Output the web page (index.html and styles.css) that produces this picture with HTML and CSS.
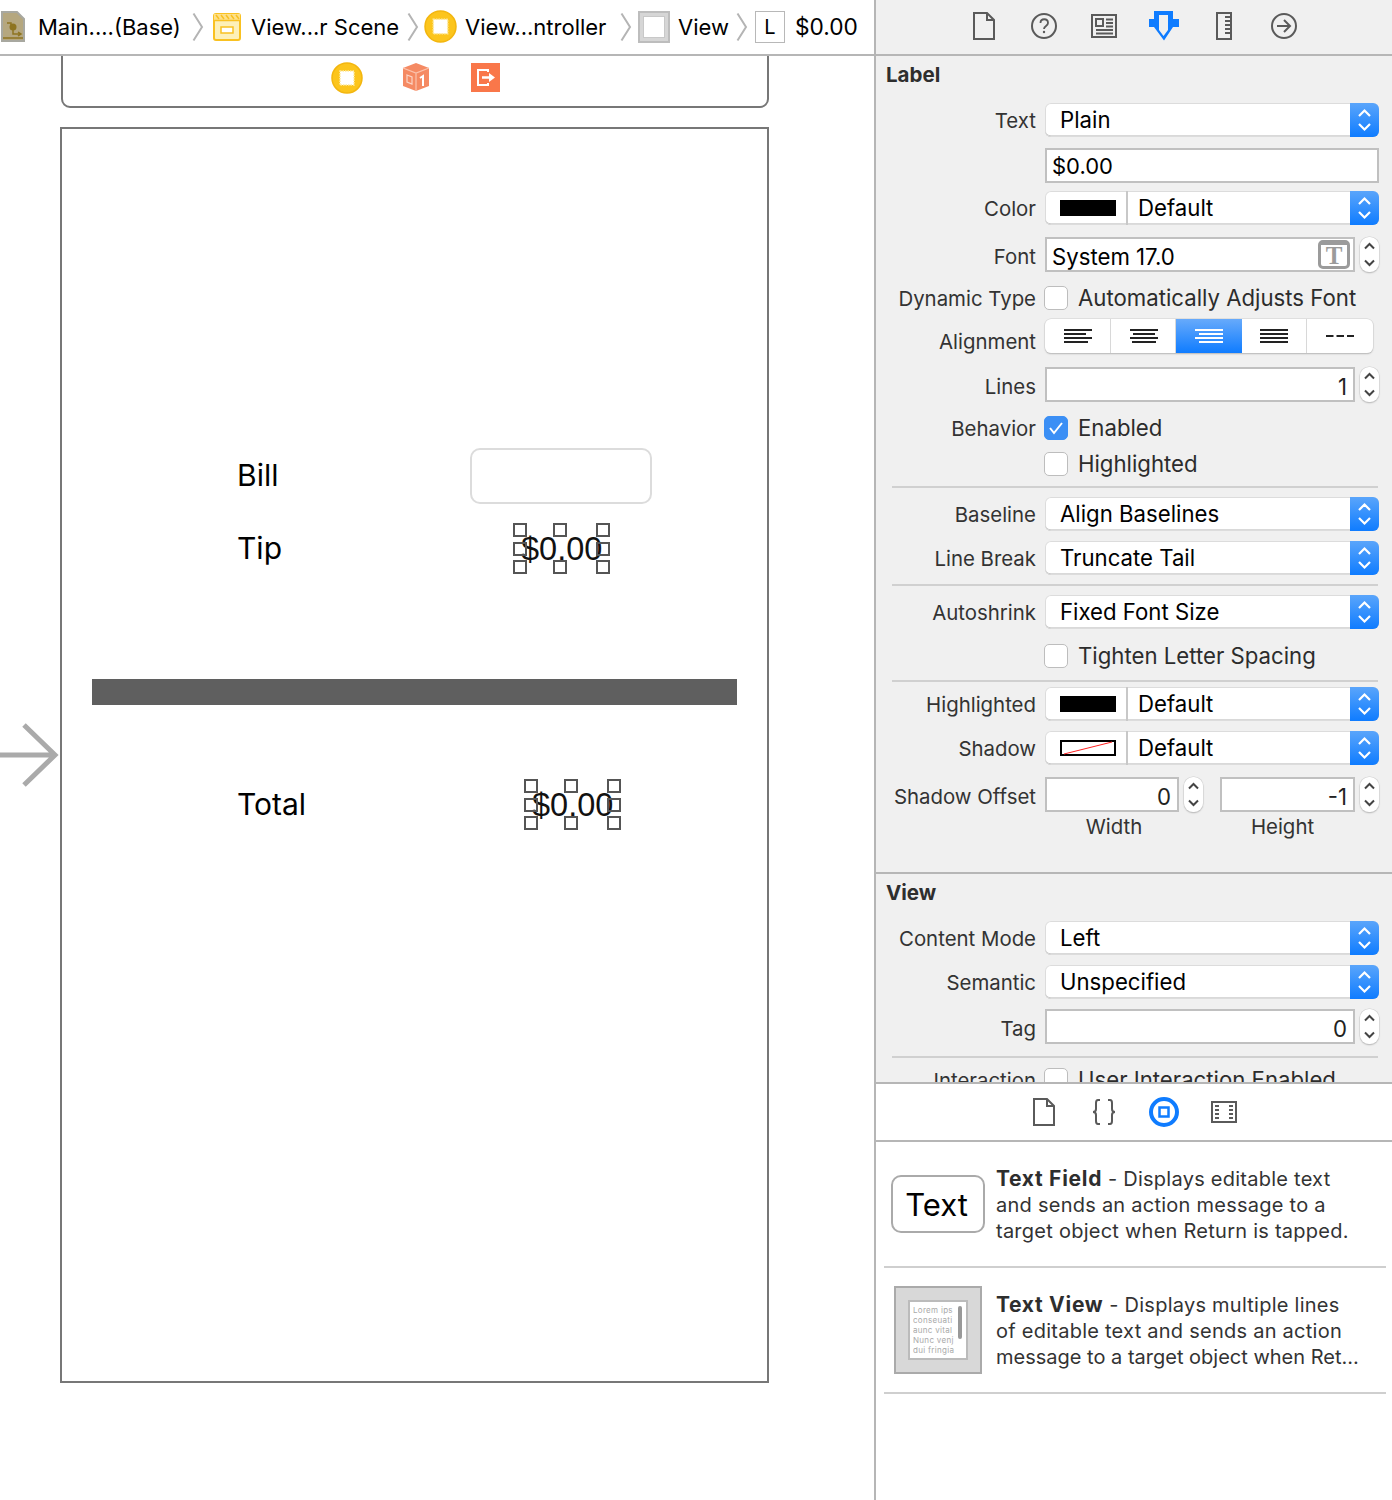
FILE: index.html
```html
<!DOCTYPE html>
<html lang="en">
<head>
<meta charset="utf-8">
<title>Storyboard</title>
<link rel="stylesheet" href="styles.css">
</head>
<body>
<svg class="defs" width="0" height="0">
  <symbol id="updown" viewBox="0 0 29 34"><path d="M9 13l5.500-5.500L20 13M9 21l5.500 5.500L20 21" fill="none" stroke="#fff" stroke-width="2.200"/></symbol>
  <symbol id="stepicon" viewBox="0 0 19 35"><path d="M5 11.500l4.500-4.500 4.500 4.500M5 23.500l4.500 4.500 4.500-4.500" fill="none" stroke="#444" stroke-width="2"/></symbol>
  <symbol id="crumbchev" viewBox="0 0 12 30"><path d="M1.500 1.500L10 15 1.500 28.500" fill="none" stroke="#b4b4b4" stroke-width="2"/></symbol>
  <symbol id="chip" viewBox="0 0 32 32"><circle cx="16" cy="16" r="15" fill="#fcc51c" stroke="#f3b60f" stroke-width="1.500"/><rect x="9" y="9" width="14" height="14" fill="#fff" stroke="#fde9a0" stroke-width="1.500" stroke-dasharray="1.500 1"/></symbol>
</svg>
<div class="app">
  <main class="editor">
    <nav class="crumbs">
      <svg class="c-doc" width="26" height="32" viewBox="0 0 26 32"><path d="M2 1h15l7 7v22H2z" fill="#b5a77f" stroke="#a8a8a0" stroke-width="2"/><circle cx="13" cy="16" r="3.500" fill="#8e7420"/><path d="M7 12h4v4M13 16v7h8M18 21l3 2-3 2M3 27h20" fill="none" stroke="#8e7420" stroke-width="1.500"/></svg>
      <span class="c-text c-main">Main....(Base)</span>
      <svg class="c-chev" width="12" height="30"><use href="#crumbchev"/></svg>
      <svg class="c-scene" width="28" height="28" viewBox="0 0 28 28"><rect x="1" y="1" width="26" height="26" rx="2" fill="#fdf0b8" stroke="#f9c121" stroke-width="2"/><path d="M1 1h26v6H1z" fill="#fde08a"/><path d="M3 2l3 4M8 2l3 4M13 2l3 4M18 2l3 4M23 2l3 4" stroke="#f9c121" stroke-width="1.500"/><path d="M1 7.500h26" stroke="#f9c121" stroke-width="1.500"/><rect x="8" y="14" width="12" height="6" fill="#fff" stroke="#f9c121" stroke-width="1.500"/></svg>
      <span class="c-text c-scenetext">View...r Scene</span>
      <svg class="c-chev c-tight" width="12" height="30"><use href="#crumbchev"/></svg>
      <svg class="c-chip" width="33" height="33"><use href="#chip"/></svg>
      <span class="c-text c-vc">View...ntroller</span>
      <svg class="c-chev c-wide" width="12" height="30"><use href="#crumbchev"/></svg>
      <span class="c-view"><span class="c-view-in"></span></span>
      <span class="c-text c-viewtext">View</span>
      <svg class="c-chev" width="12" height="30"><use href="#crumbchev"/></svg>
      <span class="c-l">L</span>
      <span class="c-text c-amount">$0.00</span>
    </nav>
    <div class="canvas">
      <div class="dock">
        <svg class="dock-chip" width="32" height="32"><use href="#chip"/></svg>
        <svg class="dock-cube" width="28" height="30" viewBox="0 0 28 30"><path d="M14 1l13 5v18l-13 5-13-5V6z" fill="#f58a63"/><path d="M1 6l13 5 13-5M14 11v18" fill="none" stroke="#fbc3ad" stroke-width="1.200"/><path d="M5 13l5 2v7l-5-2z" fill="none" stroke="#fbd5c6" stroke-width="1.200"/><path d="M18 16l3-2v10" fill="none" stroke="#fff" stroke-width="2"/></svg>
        <svg class="dock-exit" width="29" height="29" viewBox="0 0 29 29"><rect width="29" height="29" fill="#f9774a"/><path d="M17 9V7H7v15h10v-2" fill="none" stroke="#fff" stroke-width="2"/><path d="M11 14.500h8" stroke="#fff" stroke-width="2.500"/><path d="M18 10l6 4.500-6 4.500z" fill="#fff"/></svg>
      </div>
      <svg class="entry" width="60" height="66" viewBox="0 0 60 66"><path d="M0 33h55M24 3l31 30-31 30" fill="none" stroke="#aaa" stroke-width="5"/></svg>
      <section class="screen">
        <span class="ui-label lb-bill">Bill</span>
        <div class="ui-field"></div>
        <span class="ui-label lb-tip">Tip</span>
        <div class="picked picked-tip"><span class="picked-text">$0.00</span><i class="h tl"></i><i class="h tc"></i><i class="h tr"></i><i class="h ml"></i><i class="h mr"></i><i class="h bl"></i><i class="h bc"></i><i class="h br"></i></div>
        <div class="ui-bar"></div>
        <span class="ui-label lb-total">Total</span>
        <div class="picked picked-total"><span class="picked-text">$0.00</span><i class="h tl"></i><i class="h tc"></i><i class="h tr"></i><i class="h ml"></i><i class="h mr"></i><i class="h bl"></i><i class="h bc"></i><i class="h br"></i></div>
      </section>
    </div>
  </main>

  <aside class="side">
    <div class="tabs tabs-top">
      <svg width="24" height="28" viewBox="0 0 24 28"><path d="M2 1h13l7 7v19H2zM15 1v7h7" fill="none" stroke="#5a5a5a" stroke-width="2"/></svg>
      <svg width="26" height="26" viewBox="0 0 26 26"><circle cx="13" cy="13" r="12" fill="none" stroke="#5a5a5a" stroke-width="2"/><path d="M9.500 10c0-5 7.500-5 7.500 0 0 3-4 3-4 6" fill="none" stroke="#5a5a5a" stroke-width="1.800"/><circle cx="13" cy="19" r="1.200" fill="#5a5a5a"/></svg>
      <svg width="26" height="24" viewBox="0 0 26 24"><path d="M1 1h24v22H1z" fill="none" stroke="#5a5a5a" stroke-width="2"/><path d="M5 5h7v7H5z" fill="none" stroke="#5a5a5a" stroke-width="2"/><path d="M15 5.500h7M15 9h7M15 12.500h7M5 16h17M5 19.500h17" stroke="#5a5a5a" stroke-width="1.800"/></svg>
      <svg width="30" height="30" viewBox="0 0 30 30"><path fill-rule="evenodd" d="M5 0h19v8h6v8h-6L15 29.500 5 16H0V8h5zM10 4v15l4.500 6 4.500-6V4z" fill="#0f7cff"/></svg>
      <svg width="16" height="28" viewBox="0 0 16 28"><path d="M1 1h14v26H1z" fill="none" stroke="#5a5a5a" stroke-width="2"/><path d="M9 5h5M9 9h5M9 13h5M9 17h5M9 21h5" stroke="#5a5a5a" stroke-width="2"/></svg>
      <svg width="26" height="26" viewBox="0 0 26 26"><circle cx="13" cy="13" r="12" fill="none" stroke="#5a5a5a" stroke-width="2"/><path d="M6 13h13M13 7l6 6-6 6" fill="none" stroke="#5a5a5a" stroke-width="2"/></svg>
    </div>

    <div class="inspector">
      <h2 class="head">Label</h2>
      <div class="form form-first">
        <div class="row"><label class="lab">Text</label><div class="popup"><span class="val val-left">Plain</span><svg class="blue" width="29" height="34"><use href="#updown"/></svg></div></div>
        <div class="row row-plain g11"><span class="lab"></span><div class="field field-grow"><span class="val val-str">$0.00</span></div></div>
        <div class="row g8"><label class="lab">Color</label><div class="popup"><span class="swatch-cell"><span class="swatch"></span></span><span class="val val-def">Default</span><svg class="blue" width="29" height="34"><use href="#updown"/></svg></div></div>
        <div class="row row-35 g12"><label class="lab">Font</label><div class="field field-grow field-font"><span class="val">System 17.0</span><span class="t-btn">T</span></div><svg class="step" width="19" height="35"><use href="#stepicon"/></svg></div>
        <div class="row row-24 g14"><label class="lab">Dynamic Type</label><span class="check"></span><span class="check-text">Automatically Adjusts Font</span></div>
        <div class="row g9"><label class="lab lab-low">Alignment</label>
          <div class="segs">
            <span class="seg seg-nudge"><svg width="28" height="16" viewBox="0 0 28 16"><path d="M0 2h28M0 6h22M0 10h28M0 14h24" stroke="#222" stroke-width="1.800"/></svg></span>
            <span class="seg seg-nudge"><svg width="28" height="16" viewBox="0 0 28 16"><path d="M0 2h28M3 6h22M0 10h28M2 14h24" stroke="#222" stroke-width="1.800"/></svg></span>
            <span class="seg seg-on"><svg width="28" height="16" viewBox="0 0 28 16"><path d="M0 2h28M4 6h24M0 10h28M4 14h24" stroke="#fff" stroke-width="1.800"/></svg></span>
            <span class="seg"><svg width="28" height="16" viewBox="0 0 28 16"><path d="M0 2h28M0 6h28M0 10h28M0 14h28" stroke="#222" stroke-width="1.800"/></svg></span>
            <span class="seg"><svg width="28" height="4" viewBox="0 0 28 4"><path d="M0 2h7.500M10.500 2h7.500M21 2h7" stroke="#222" stroke-width="1.800"/></svg></span>
          </div>
        </div>
        <div class="row row-35 g14"><label class="lab">Lines</label><div class="field field-grow field-num"><span class="val">1</span></div><svg class="step" width="19" height="35"><use href="#stepicon"/></svg></div>
        <div class="row row-24 g14"><label class="lab">Behavior</label><span class="check check-on"><svg width="16" height="14" viewBox="0 0 16 14"><path d="M2 7l4 5 8-10" fill="none" stroke="#fff" stroke-width="2"/></svg></span><span class="check-text">Enabled</span></div>
        <div class="row row-24 g12"><span class="lab"></span><span class="check"></span><span class="check-text">Highlighted</span></div>
        <hr class="sep g10">
        <div class="row g9 "><label class="lab">Baseline</label><div class="popup"><span class="val val-left">Align Baselines</span><svg class="blue" width="29" height="34"><use href="#updown"/></svg></div></div>
        <div class="row g10"><label class="lab">Line Break</label><div class="popup"><span class="val val-left">Truncate Tail</span><svg class="blue" width="29" height="34"><use href="#updown"/></svg></div></div>
        <hr class="sep g9">
        <div class="row g9"><label class="lab">Autoshrink</label><div class="popup"><span class="val val-left">Fixed Font Size</span><svg class="blue" width="29" height="34"><use href="#updown"/></svg></div></div>
        <div class="row row-24 g15"><span class="lab"></span><span class="check"></span><span class="check-text">Tighten Letter Spacing</span></div>
        <hr class="sep g12">
        <div class="row g5"><label class="lab">Highlighted</label><div class="popup"><span class="swatch-cell"><span class="swatch"></span></span><span class="val val-def">Default</span><svg class="blue" width="29" height="34"><use href="#updown"/></svg></div></div>
        <div class="row g10"><label class="lab">Shadow</label><div class="popup"><span class="swatch-cell"><svg width="56" height="16" viewBox="0 0 56 16"><rect x="1" y="1" width="54" height="14" fill="#fff" stroke="#000" stroke-width="2"/><path d="M4 14L52 2" stroke="#f22" stroke-width="1"/></svg></span><span class="val val-def">Default</span><svg class="blue" width="29" height="34"><use href="#updown"/></svg></div></div>
        <div class="row row-35 g12"><label class="lab">Shadow Offset</label><div class="field field-num field-w"><span class="val">0</span></div><svg class="step" width="19" height="35"><use href="#stepicon"/></svg><div class="field field-num field-h"><span class="val">-1</span></div><svg class="step" width="19" height="35"><use href="#stepicon"/></svg></div>
        <div class="sublabels"><span class="sub sub-w">Width</span><span class="sub sub-h">Height</span></div>
      </div>
      <h2 class="head head-view">View</h2>
      <div class="form form-first">
        <div class="row"><label class="lab">Content Mode</label><div class="popup"><span class="val val-left">Left</span><svg class="blue" width="29" height="34"><use href="#updown"/></svg></div></div>
        <div class="row g10"><label class="lab">Semantic</label><div class="popup"><span class="val val-left">Unspecified</span><svg class="blue" width="29" height="34"><use href="#updown"/></svg></div></div>
        <div class="row row-35 g10"><label class="lab">Tag</label><div class="field field-grow field-num"><span class="val">0</span></div><svg class="step" width="19" height="35"><use href="#stepicon"/></svg></div>
        <hr class="sep g12">
        <div class="row row-24 g10"><label class="lab">Interaction</label><span class="check"></span><span class="check-text">User Interaction Enabled</span></div>
      </div>
    </div>

    <div class="tabs tabs-lib">
      <svg width="24" height="28" viewBox="0 0 24 28"><path d="M2 1h13l7 7v19H2zM15 1v7h7" fill="none" stroke="#5a5a5a" stroke-width="2"/></svg>
      <svg width="24" height="28" viewBox="0 0 24 28"><path d="M8 2H6Q4 2 4 5v6q0 3-3 3 3 0 3 3v6q0 3 2 3h2M16 2h2q2 0 2 3v6q0 3 3 3-3 0-3 3v6q0 3-2 3h-2" fill="none" stroke="#5a5a5a" stroke-width="2"/></svg>
      <svg width="30" height="30" viewBox="0 0 30 30"><circle cx="15" cy="15" r="13" fill="none" stroke="#0f7cff" stroke-width="4"/><rect x="10.500" y="10.500" width="9" height="9" fill="none" stroke="#0f7cff" stroke-width="2.500"/></svg>
      <svg width="26" height="22" viewBox="0 0 26 22"><path d="M1 1h24v20H1z" fill="none" stroke="#5a5a5a" stroke-width="2"/><path d="M4 5h4M4 9h4M4 13h4M4 17h4M18 5h4M18 9h4M18 13h4M18 17h4" stroke="#5a5a5a" stroke-width="2"/></svg>
    </div>

    <div class="library">
      <article class="item">
        <div class="item-icon"><span class="text-sample">Text</span></div>
        <p class="item-text"><b>Text Field</b> - Displays editable text<br>and sends an action message to a<br>target object when Return is tapped.</p>
      </article>
      <article class="item">
        <div class="item-icon"><div class="thumb"><div class="thumb-in"><span class="thumb-lines">Lorem ips<br>conseuati<br>aunc vital<br>Nunc venj<br>dui fringia</span><span class="thumb-bar"></span></div></div></div>
        <p class="item-text"><b>Text View</b> - Displays multiple lines<br>of editable text and sends an action<br><span class="line-tight">message to a target object when Ret…</span></p>
      </article>
    </div>
  </aside>
</div>
</body>
</html>
```

FILE: styles.css
```css
* { box-sizing: border-box; }
html, body { margin: 0; padding: 0; }
body { width: 1392px; height: 1500px; overflow: hidden; background: #fff; font-family: Inter, "Liberation Sans", sans-serif; color: #000; }
.defs { position: absolute; }
.app { display: flex; width: 1392px; height: 1500px; }

/* editor */
.editor { width: 876px; height: 1500px; border-right: 2px solid #b6b6b6; display: flex; flex-direction: column; }
.crumbs { height: 56px; flex: none; border-bottom: 2px solid #b6b6b6; display: flex; align-items: center; padding-bottom: 1px; font-size: 22px; white-space: nowrap; }
.crumbs svg { flex: none; }
.c-text { display: block; flex: none; }
.c-doc { margin-right: 12px; }
.c-main { width: 141px; }
.c-chev { margin-left: 13px; margin-right: 9px; }
.c-scene { margin-right: 10px; }
.c-scenetext { width: 147px; }
.c-tight { margin-left: 9px; margin-right: 5px; }
.c-vc { margin-left: 8px; width: 142px; }
.c-wide { margin-left: 13px; margin-right: 6px; }
.c-view { flex: none; width: 32px; height: 32px; background: #d6d6d6; border: 2px solid #bdbdbd; padding: 3px; margin-right: 8px; }
.c-view-in { display: block; width: 100%; height: 100%; background: #fff; border: 1px solid #c8c8c8; }
.c-viewtext { width: 49px; margin-right: -4px; }
.c-l { flex: none; width: 30px; height: 32px; border: 1.500px solid #b8b8b8; display: flex; align-items: center; justify-content: center; font-size: 20px; margin-left: -2px; margin-right: 10px; }
.c-amount { font-size: 22.700px; }

.canvas { position: relative; flex: 1; overflow: hidden; background: #fff; }
.dock { position: absolute; left: 61px; top: -4px; width: 708px; height: 56px; border: 2px solid #777; border-radius: 0 0 9px 9px; }
.dock svg { position: absolute; }
.dock-chip { left: 268px; top: 8px; }
.dock-cube { left: 339px; top: 8px; }
.dock-exit { left: 408px; top: 9px; }
.entry { position: absolute; left: 0; top: 666px; }
.screen { position: absolute; left: 60px; top: 71px; width: 709px; height: 1256px; border: 2px solid #777; }
.ui-label { position: absolute; left: 175px; font-size: 30px; line-height: 36px; }
.lb-bill { top: 328px; }
.lb-tip { top: 401px; }
.lb-total { top: 657px; }
.ui-field { position: absolute; left: 408px; top: 319px; width: 182px; height: 56px; border: 2px solid #dcdcdc; border-radius: 10px; background: #fff; }
.ui-bar { position: absolute; left: 30px; top: 550px; width: 645px; height: 26px; background: #5f5f5f; }
.picked { position: absolute; width: 97px; height: 51px; }
.picked-tip { left: 451px; top: 394px; }
.picked-total { left: 462px; top: 650px; }
.picked-text { position: absolute; left: 8px; top: 4px; font-family: "Liberation Sans", sans-serif; font-size: 32.500px; line-height: 44px; color: #111; }
.h { position: absolute; width: 14px; height: 14px; border: 2px solid #555; background: transparent; }
.tl, .tc, .tr { top: 0; }
.ml, .mr { top: 19px; }
.bl, .bc, .br { bottom: 0; }
.tl, .ml, .bl { left: 0; }
.tc, .bc { left: 40px; }
.tr, .mr, .br { right: 0; }

/* sidebar */
.side { width: 516px; height: 1500px; flex: none; display: flex; flex-direction: column; background: #fff; }
.tabs { display: grid; grid-template-columns: repeat(6, 60px); justify-content: start; justify-items: center; align-items: center; flex: none; }
.tabs-top { height: 56px; border-bottom: 2px solid #b6b6b6; background: #f0f0f0; padding-left: 78px; padding-bottom: 3px; }
.tabs-lib { height: 60px; border-top: 2px solid #b6b6b6; border-bottom: 2px solid #b6b6b6; padding-left: 138px; grid-template-columns: repeat(4, 60px); }
.inspector { height: 1026px; flex: none; overflow: hidden; background: #f0f0f0; }
.head { margin: 0; height: 38px; padding-left: 10px; font-size: 20.500px; font-weight: 700; line-height: 38px; color: #2e2e2e; }
.head-view { height: 40px; border-top: 2px solid #b6b6b6; }
.form { padding-right: 13px; }
.form-first { padding-top: 9px; }
.row { display: flex; align-items: center; height: 34px; }
.row-35, .row-plain { height: 35px; }
.row-24 { height: 24px; }
.g5 { margin-top: 5px; } .g8 { margin-top: 8px; } .g9 { margin-top: 9px; } .g10 { margin-top: 10px; }
.g11 { margin-top: 11px; } .g12 { margin-top: 12px; } .g14 { margin-top: 14px; } .g15 { margin-top: 15px; }
.lab { flex: none; width: 160px; text-align: right; font-size: 20.400px; color: #333; margin-right: 9px; white-space: nowrap; }
.lab-low { margin-top: 10px; }
.row-35 .lab { margin-top: 4px; }
.popup { flex: 1; height: 34px; display: flex; align-items: center; background: #fff; border-radius: 6px; box-shadow: inset 0 0 0 1px #dcdcdc, inset 0 -1.500px 0 #b4b4b4; overflow: hidden; }
.val { font-size: 22.200px; color: #000; white-space: nowrap; }
.popup .val { margin-bottom: 2px; }
.row-35 .val { margin-top: 4px; }
.val-str { font-size: 22px; }
.val-left { margin-left: 15px; }
.val-def { margin-left: 10px; }
.blue { flex: none; margin-left: auto; background: linear-gradient(#5aa5fb, #0f7cff); }
.swatch-cell { flex: none; width: 83px; height: 34px; border-right: 2px solid #c8c8c8; display: flex; align-items: center; justify-content: center; padding-left: 5px; }
.swatch { width: 56px; height: 16px; background: #000; }
.field { height: 35px; background: #fff; border: 2px solid #c0c0c0; display: flex; align-items: center; padding: 0 5px; }
.field-grow { flex: 1; }
.field-num { justify-content: flex-end; padding-right: 6px; }
.field-num .val { color: #222; }
.field-font { position: relative; }
.t-btn { position: absolute; right: 3px; top: 1px; width: 32px; height: 29px; border: 3px solid #9b9b9b; border-radius: 5px; border-top-width: 5px; color: #9b9b9b; font-family: "Liberation Serif", serif; font-weight: 700; font-size: 25px; line-height: 21px; text-align: center; }
.step { flex: none; margin-left: 5px; background: #fff; border-radius: 9px; box-shadow: 0 0 0 .5px #cfcfcf, 0 1px 1.500px #a8a8a8; }
.check { flex: none; width: 24px; height: 24px; margin-left: -1px; border: 1.500px solid #bdbdbd; background: #fff; border-radius: 5px; display: flex; align-items: center; justify-content: center; }
.check-on { background: #3b8ff5; border-color: #3b8ff5; }
.check-text { margin-left: 10px; margin-bottom: 2px; font-size: 22.200px; color: #2c2c2c; white-space: nowrap; }
.segs { width: 328px; height: 34px; display: grid; grid-template-columns: repeat(5, 1fr); background: #fff; border-radius: 6px; box-shadow: 0 0 0 .5px #cfcfcf, 0 1px 1.500px #a8a8a8; overflow: hidden; }
.seg { display: flex; align-items: center; justify-content: center; border-right: 1px solid #d8d8d8; }
.seg-nudge { padding-left: 2px; }
.seg:last-child { border-right: 0; }
.seg-on { background: linear-gradient(#67aafb, #0f7cff); border-right: 0; }
.sep { display: block; height: 2px; border: 0; background: #d0d0d0; margin-bottom: 0; margin-left: 16px; margin-right: 1px; }
hr.g9 { margin-top: 9px; } hr.g10 { margin-top: 10px; } hr.g12 { margin-top: 12px; }
.field-w { width: 134px; flex: none; }
.field-h { flex: 1; margin-left: 17px; }
.sublabels { display: flex; height: 26px; margin-top: 2px; margin-bottom: 32px; font-size: 20.400px; color: #333; }
.sub { display: block; text-align: center; }
.sub-w { width: 134px; margin-left: 171px; }
.sub-h { width: 135px; margin-left: 34px; }

/* library */
.library { flex: 1; padding: 0 6px 0 8px; }
.item { height: 126px; display: flex; align-items: center; border-bottom: 2px solid #cfcfcf; padding-left: 7px; }
.item-icon { flex: none; width: 94px; margin-right: 11px; display: flex; justify-content: center; }
.text-sample { display: flex; align-items: center; justify-content: center; width: 94px; height: 58px; padding-right: 3px; border: 2px solid #aaa; border-radius: 10px; font-size: 31px; }
.thumb { width: 88px; height: 88px; background: #d8d8d8; border: 2px solid #aaa; display: flex; align-items: center; justify-content: center; }
.thumb-in { position: relative; width: 60px; height: 60px; background: #fff; border: 2px solid #bbb; padding: 3px 0 0 3px; }
.thumb-lines { display: block; font-size: 8px; line-height: 10px; letter-spacing: .3px; color: #a9a9a9; white-space: nowrap; overflow: hidden; width: 46px; }
.thumb-bar { position: absolute; right: 4px; top: 4px; width: 4px; height: 33px; border-radius: 2px; background: #999; }
.item-text { margin: 0; padding-top: 2px; font-size: 20px; line-height: 26px; color: #333; white-space: nowrap; letter-spacing: .25px; }
.item-text b { font-size: 21px; letter-spacing: .7px; font-weight: 700; color: #2e2e2e; }
.line-tight { letter-spacing: 0; }
```
